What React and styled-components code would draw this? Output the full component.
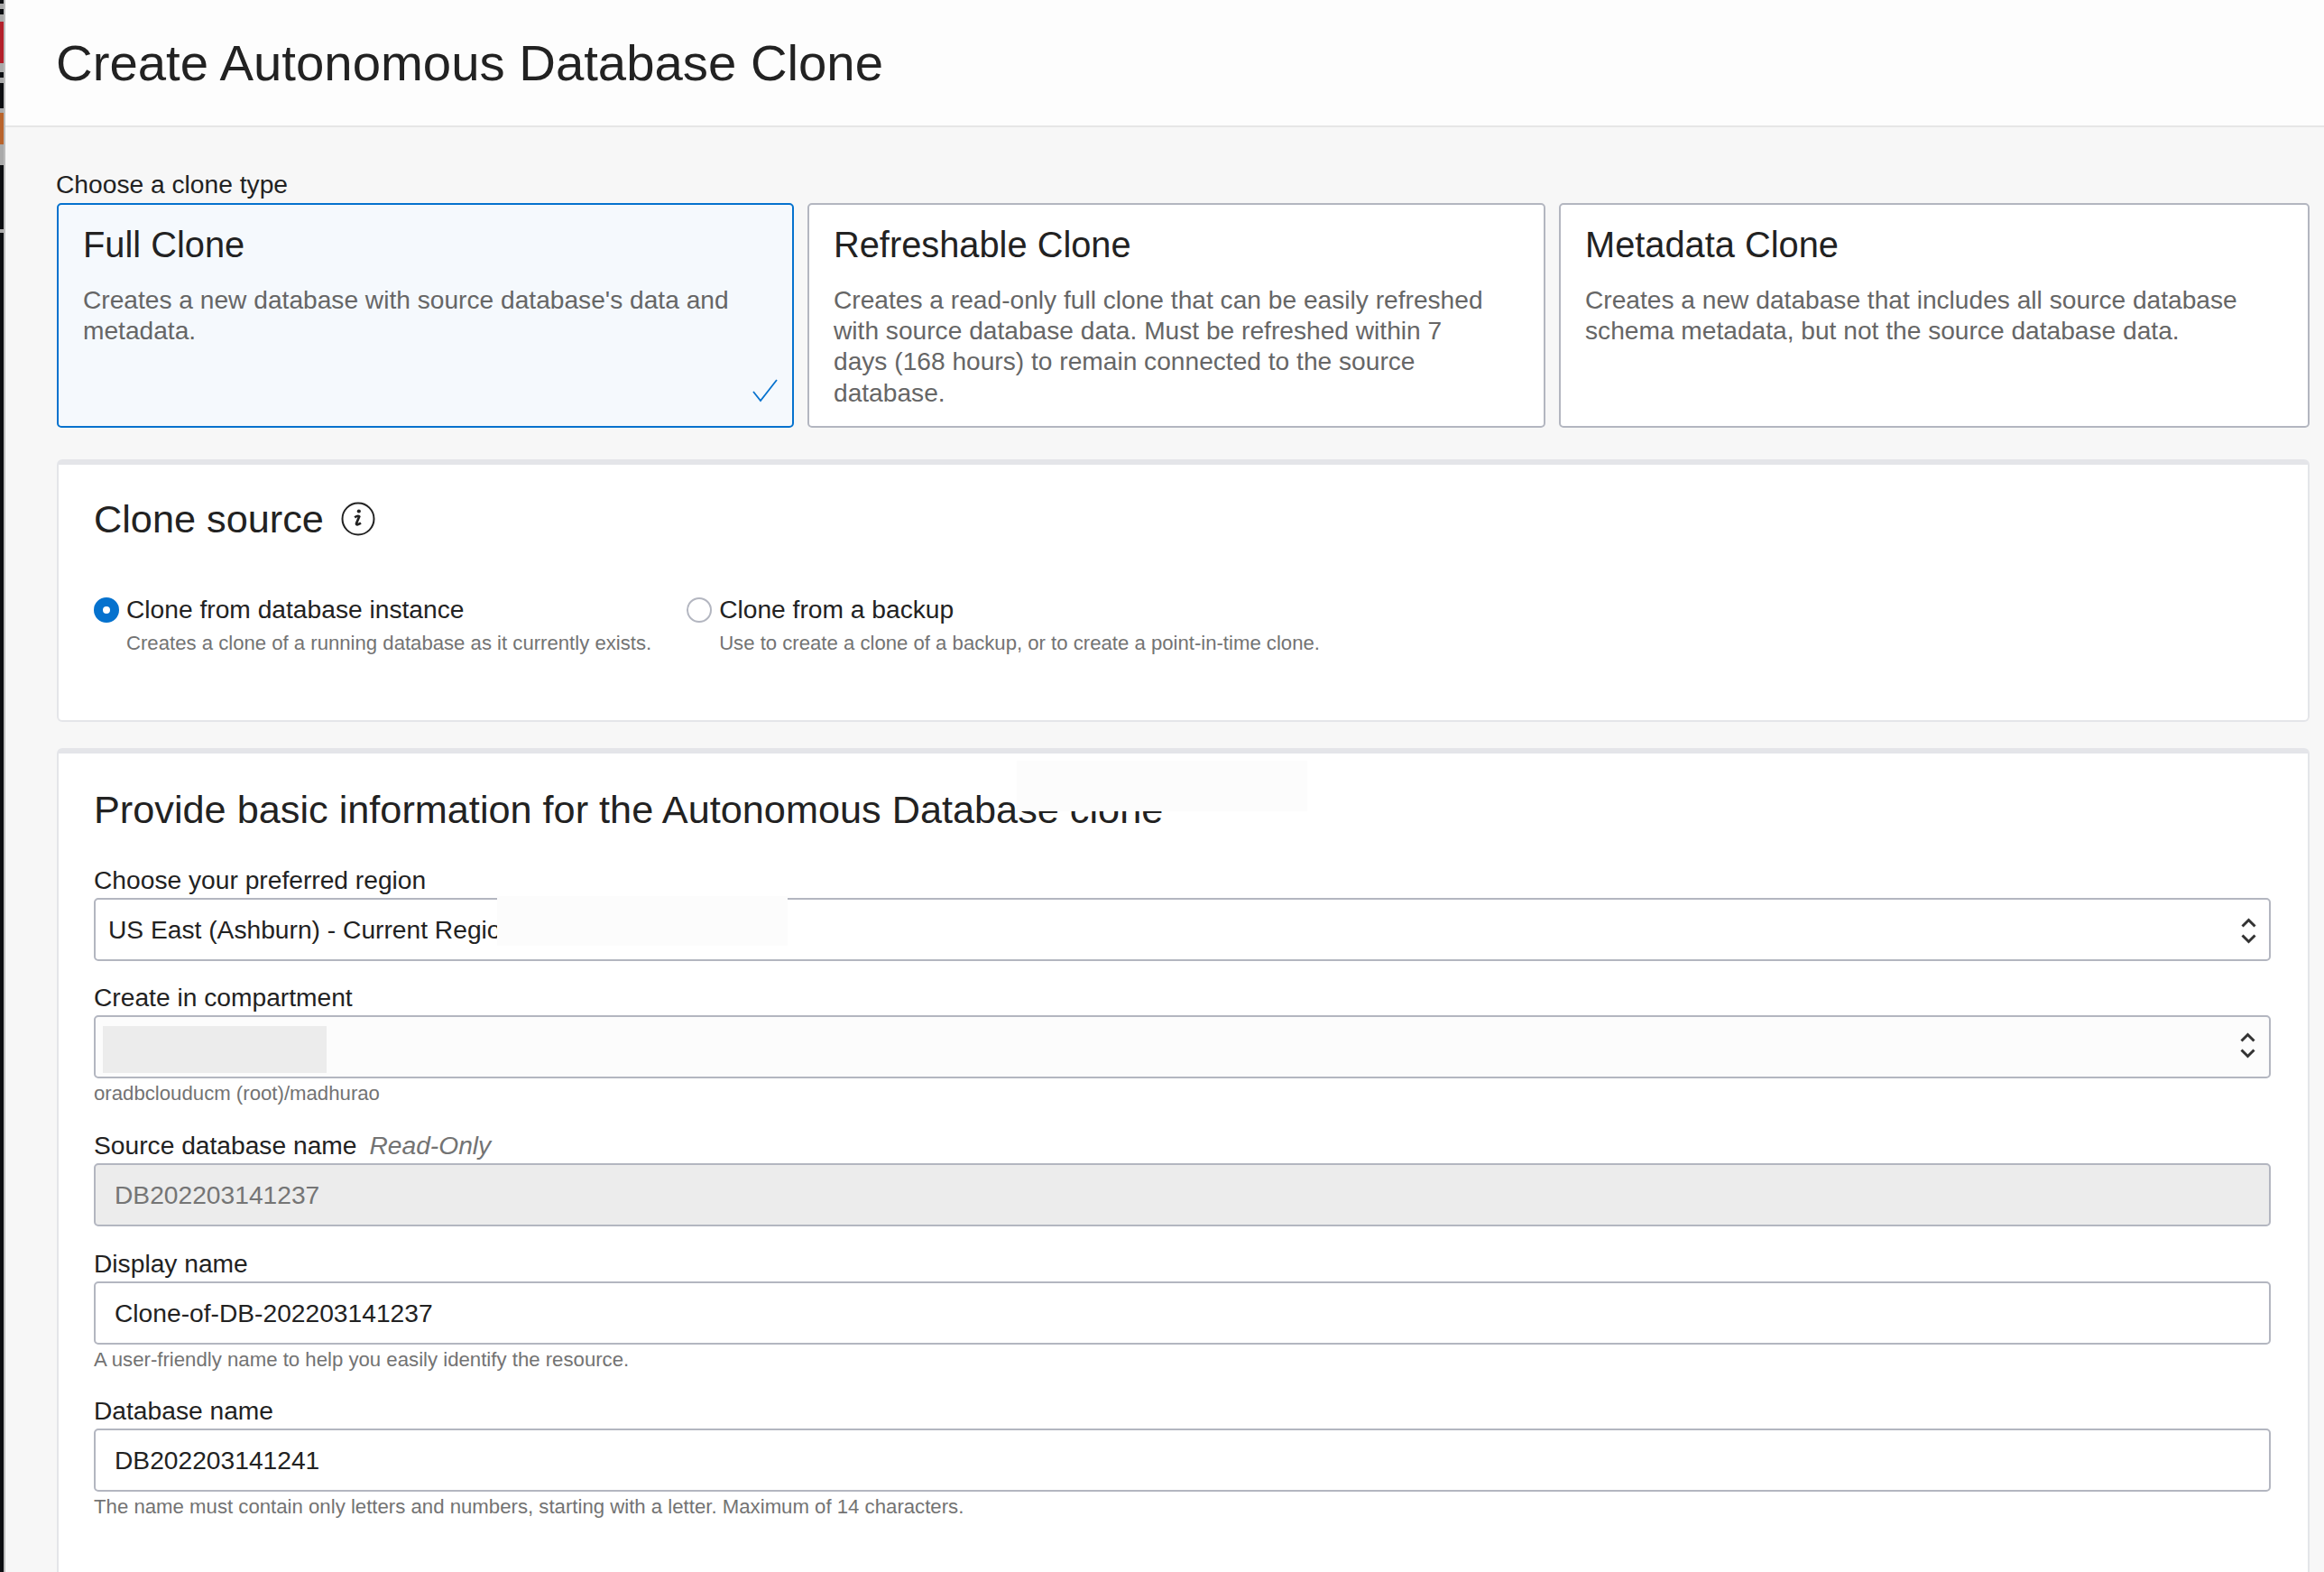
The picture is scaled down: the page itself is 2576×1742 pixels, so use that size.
import React from "react";
import styled, { createGlobalStyle } from "styled-components";

const GlobalStyle = createGlobalStyle`
  html, body {
    margin: 0;
    padding: 0;
    background: #f7f7f7;
  }
  body {
    font-family: "Liberation Sans", Arial, sans-serif;
    color: #222;
  }
  * { box-sizing: border-box; }
`;

const Shell = styled.div`
  display: flex;
  width: 2576px;
  height: 1742px;
  overflow: hidden;
`;

// sliver of the desktop behind the browser window
const DesktopEdge = styled.div`
  flex: 0 0 6px;
  border-right: 2px solid #bdbdbd;
  background: linear-gradient(
    to bottom,
    #0d0f12 0 4px, #aaa 4px 10px, #0d0f12 10px 16px, #aaa 16px 24px,
    #b3202a 24px 70px, #aaa 70px 80px, #0d0f12 80px 86px, #aaa 86px 92px,
    #0d0f12 92px 120px, #aaa 120px 125px, #b9642c 125px 160px, #aaa 160px 183px,
    #0d0f12 183px 254px, #aaa 254px 258px, #0d0f12 258px
  );
`;

const Page = styled.div`
  flex: 1;
  min-width: 0;
  display: flex;
  flex-direction: column;
`;

const Header = styled.header`
  height: 141px;
  flex: none;
  display: flex;
  align-items: center;
  padding: 0 0 0 56px;
  background: #fdfdfd;
  border-bottom: 2px solid #e6e6e6;
`;

const Title = styled.h1`
  margin: 0;
  font-size: 56.3px;
  font-weight: 400;
  line-height: 64px;
  color: #222;
`;

const Content = styled.main`
  padding: 46px 16px 0 57px;
  display: flex;
  flex-direction: column;
`;

const TypeLabel = styled.div`
  font-size: 28.2px;
  line-height: 35px;
  height: 38px;
  margin-left: -1px;
  color: #222;
`;

const CardRow = styled.div`
  display: grid;
  grid-template-columns: 817px 818px 832px;
  gap: 15px;
`;

const Card = styled.div`
  position: relative;
  height: 249px;
  padding: 19px 27px 0;
  border-radius: 5px;
  border: 2px solid ${(p) => (p.$selected ? "#0572ce" : "#b3b6c0")};
  background: ${(p) => (p.$selected ? "#f5f9fd" : "#fff")};
`;

const CardTitle = styled.div`
  font-size: 39.8px;
  line-height: 50px;
  color: #222;
`;

const CardText = styled.p`
  margin: 20px 0 0;
  max-width: 738px;
  font-size: 28.15px;
  line-height: 34.2px;
  color: #666;
`;

const CheckMark = styled.svg`
  position: absolute;
  right: 16px;
  bottom: 26px;
  width: 28px;
  height: 26px;
`;

const Panel = styled.section`
  background: #fff;
  border: 2px solid #e4e5e9;
  border-top-width: 6px;
  border-radius: 6px;
  padding: 0 41px 0 39px;
  margin-top: ${(p) => p.$top}px;
  height: ${(p) => p.$height}px;
  position: relative;
`;

const HeadingRow = styled.div`
  display: flex;
  align-items: center;
  gap: 19px;
  height: 52px;
  margin-top: ${(p) => p.$top}px;
`;

const Heading = styled.h2`
  margin: 0;
  font-size: 43.25px;
  font-weight: 400;
  line-height: 52px;
  color: #222;
`;

const RadioRow = styled.div`
  display: flex;
  gap: 39px;
  margin-top: 58px;
`;

const RadioOption = styled.div`
  display: grid;
  grid-template-columns: 28px auto;
  column-gap: 8px;
  align-items: center;
`;

const RadioDot = styled.span`
  width: 28px;
  height: 28px;
  border-radius: 50%;
  background: #fff;
  border: ${(p) => (p.$on ? "10px solid #0572ce" : "2px solid #b3b6c0")};
`;

const RadioLabel = styled.div`
  font-size: 28.2px;
  line-height: 33px;
  color: #222;
`;

const RadioHint = styled.div`
  grid-column: 2;
  font-size: 22.15px;
  line-height: 30px;
  margin-top: 6px;
  color: #737373;
`;

const Form = styled.div`
  display: flex;
  flex-direction: column;
  margin-top: 40px;
`;

const Field = styled.div`
  margin-bottom: ${(p) => p.$gap ?? 28}px;
`;

const FieldLabel = styled.div`
  font-size: 28.2px;
  line-height: 24px;
  height: 32px;
  color: #222;
`;

const ReadOnly = styled.span`
  margin-left: 14px;
  font-style: italic;
  color: #737373;
`;

const InputBox = styled.div`
  position: relative;
  height: 70px;
  display: flex;
  align-items: center;
  padding-left: ${(p) => (p.$select ? 14 : 21)}px;
  border: 2px solid #b3b6c0;
  border-radius: 5px;
  font-size: 28.2px;
  background: ${(p) => p.$bg || "#fff"};
  color: ${(p) => p.$fg || "#222"};
`;

const Hint = styled.div`
  font-size: 22.2px;
  line-height: 30px;
  height: 34px;
  padding-top: 2px;
  color: #737373;
`;

const Chevrons = styled.svg`
  position: absolute;
  right: ${(p) => p.$right}px;
  top: 50%;
  transform: translateY(calc(-50% + ${(p) => p.$shift}px));
  width: 19px;
  height: 30px;
`;

// pale rectangles somebody painted over the screenshot
const Patch = styled.div`
  position: absolute;
  background: ${(p) => p.$color};
  left: ${(p) => p.$x}px;
  top: ${(p) => p.$y}px;
  width: ${(p) => p.$w}px;
  height: ${(p) => p.$h}px;
`;

function SelectArrows({ right, shift }) {
  return (
    <Chevrons $right={right} $shift={shift} viewBox="0 0 19 30" fill="none" stroke="#333" strokeWidth="3">
      <path d="M2.5 10 L9.5 3 L16.5 10" />
      <path d="M2.5 20 L9.5 27 L16.5 20" />
    </Chevrons>
  );
}

function InfoIcon() {
  return (
    <svg width="38" height="38" viewBox="0 0 38 38" fill="none" stroke="#222">
      <circle cx="19" cy="19" r="17.5" strokeWidth="2" />
      <circle cx="19.8" cy="10.5" r="2.1" fill="#222" stroke="none" />
      <path d="M15.2 17.4 Q18.8 14.8 20.2 16.4 L17 24 Q16.8 26.8 22 23.6" strokeWidth="2.7" />
    </svg>
  );
}

const cloneTypes = [
  { title: "Full Clone", text: "Creates a new database with source database's data and metadata.", selected: true },
  {
    title: "Refreshable Clone",
    text: "Creates a read-only full clone that can be easily refreshed with source database data. Must be refreshed within 7 days (168 hours) to remain connected to the source database.",
  },
  {
    title: "Metadata Clone",
    text: "Creates a new database that includes all source database schema metadata, but not the source database data.",
  },
];

export default function App() {
  return (
    <Shell>
      <GlobalStyle />
      <DesktopEdge />
      <Page>
        <Header>
          <Title>Create Autonomous Database Clone</Title>
        </Header>
        <Content>
          <TypeLabel>Choose a clone type</TypeLabel>
          <CardRow>
            {cloneTypes.map((c) => (
              <Card key={c.title} $selected={c.selected}>
                <CardTitle>{c.title}</CardTitle>
                <CardText>{c.text}</CardText>
                {c.selected && (
                  <CheckMark viewBox="0 0 28 26" fill="none" stroke="#0572ce" strokeWidth="1.8">
                    <path d="M1 14 L9 24 L27 1" />
                  </CheckMark>
                )}
              </Card>
            ))}
          </CardRow>

          <Panel $top={35} $height={291}>
            <HeadingRow $top={34}>
              <Heading>Clone source</Heading>
              <InfoIcon />
            </HeadingRow>
            <RadioRow>
              <RadioOption>
                <RadioDot $on />
                <RadioLabel>Clone from database instance</RadioLabel>
                <RadioHint>Creates a clone of a running database as it currently exists.</RadioHint>
              </RadioOption>
              <RadioOption>
                <RadioDot />
                <RadioLabel>Clone from a backup</RadioLabel>
                <RadioHint>Use to create a clone of a backup, or to create a point-in-time clone.</RadioHint>
              </RadioOption>
            </RadioRow>
          </Panel>

          <Panel $top={29} $height={920}>
            <HeadingRow $top={36}>
              <Heading>Provide basic information for the Autonomous Database clone</Heading>
            </HeadingRow>
            <Patch $color="#fcfcfc" $x={1062} $y={8} $w={322} $h={56} />
            <Form>
              <Field>
                <FieldLabel>Choose your preferred region</FieldLabel>
                <InputBox $select>
                  US East (Ashburn) - Current Region
                  <SelectArrows right={13} shift={1.5} />
                </InputBox>
              </Field>
              <Patch $color="#fcfcfc" $x={486} $y={158} $w={322} $h={55} />
              <Field>
                <FieldLabel>Create in compartment</FieldLabel>
                <InputBox $select $bg="#fcfcfc">
                  <SelectArrows right={14} shift={-1.5} />
                </InputBox>
                <Hint>oradbclouducm (root)/madhurao</Hint>
              </Field>
              <Patch $color="#ececec" $x={49} $y={302} $w={248} $h={52} />
              <Field $gap={29}>
                <FieldLabel>
                  Source database name<ReadOnly>Read-Only</ReadOnly>
                </FieldLabel>
                <InputBox $bg="#ececec" $fg="#757575">DB202203141237</InputBox>
              </Field>
              <Field $gap={27}>
                <FieldLabel>Display name</FieldLabel>
                <InputBox>Clone-of-DB-202203141237</InputBox>
                <Hint>A user-friendly name to help you easily identify the resource.</Hint>
              </Field>
              <Field>
                <FieldLabel>Database name</FieldLabel>
                <InputBox>DB202203141241</InputBox>
                <Hint>The name must contain only letters and numbers, starting with a letter. Maximum of 14 characters.</Hint>
              </Field>
            </Form>
          </Panel>
        </Content>
      </Page>
    </Shell>
  );
}
